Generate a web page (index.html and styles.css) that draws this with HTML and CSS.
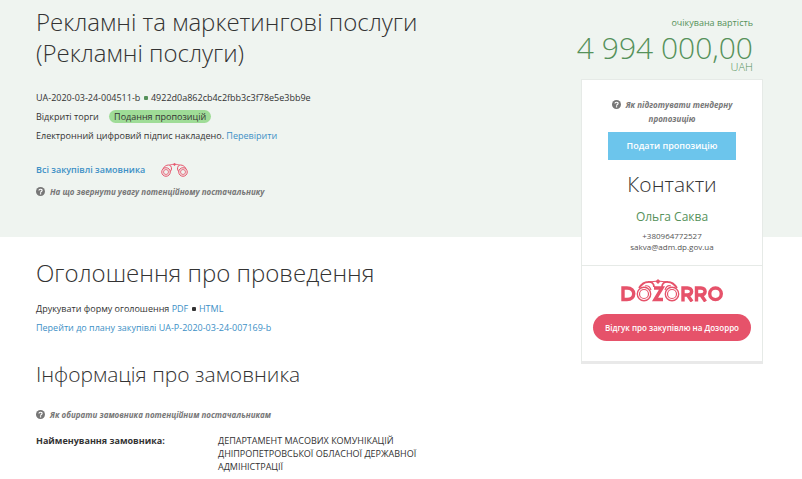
FILE: index.html
```html
<!DOCTYPE html>
<html lang="uk">
<head>
  <meta charset="UTF-8" />
  <meta name="viewport" content="width=device-width, initial-scale=1" />
  <title>Рекламні та маркетингові послуги</title>
  <link rel="stylesheet" href="styles.css">
</head>
<body>
  <!-- shared icons -->
  <svg class="sprite" aria-hidden="true">
    <symbol id="icon-question" viewBox="0 0 16 16">
      <circle cx="8" cy="8" r="8" fill="currentColor" />
      <path d="M5.2 6.3C5.3 3.2 10.8 3.2 10.8 6.2C10.8 8 8.1 8 8.1 10" fill="none" stroke="#fff" stroke-width="2.1" />
      <rect x="7" y="11" width="2.2" height="2.2" fill="#fff" />
    </symbol>
    <symbol id="icon-binoculars" viewBox="0 0 54 28">
      <g fill="none" stroke="currentColor">
        <circle cx="10" cy="18" r="8.500" stroke-width="2" />
        <circle cx="10" cy="18" r="5" stroke-width="1.600" />
        <circle cx="44" cy="18" r="8.500" stroke-width="2" />
        <circle cx="44" cy="18" r="5" stroke-width="1.600" />
        <path d="M4 11C7 7 10 4 15 4C19 4 21 7 21 12L19 17M50 11C47 7 44 4 39 4C35 4 33 7 33 12L35 17" stroke-width="2" />
        <path d="M17 4L27 2L37 4" stroke-width="1.600" />
      </g>
      <path d="M24 3L27 0L30 3L27 6Z" fill="currentColor" />
    </symbol>
  </svg>

  <div class="page">
    <header class="hero">
      <div class="hero-main">
        <h1>Рекламні та маркетингові послуги (Рекламні послуги)</h1>
        <p class="line">UA-2020-03-24-004511-b <span class="dot green"></span> 4922d0a862cb4c2fbb3c3f78e5e3bb9e</p>
        <p class="line">Відкриті торги <span class="status">Подання пропозицій</span></p>
        <p class="line">Електронний цифровий підпис накладено. <a href="#">Перевірити</a></p>
        <p class="customer">
          <a href="#">Всі закупівлі замовника</a>
          <svg class="binoculars" aria-hidden="true"><use href="#icon-binoculars" /></svg>
        </p>
        <a class="hint" href="#"><svg class="question" aria-hidden="true"><use href="#icon-question" /></svg>На що звернути увагу потенційному постачальнику</a>
      </div>
    </header>

    <aside class="sidebar">
      <div class="price">
        <span class="price-label">очікувана вартість</span>
        <strong>4&nbsp;994&nbsp;000,00</strong>
        <span class="currency">UAH</span>
      </div>
      <div class="card">
        <div class="contacts">
          <a class="hint" href="#"><svg class="question" aria-hidden="true"><use href="#icon-question" /></svg>Як підготувати тендерну пропозицію</a>
          <button type="button" class="btn-bid">Подати пропозицію</button>
          <h2>Контакти</h2>
          <h3>Ольга Саква</h3>
          <p>+380964772527</p>
          <p>sakva@adm.dp.gov.ua</p>
        </div>
        <div class="dozorro">
          <svg class="logo" viewBox="0 0 102 23" role="img" aria-label="Dozorro">
            <g fill="none" stroke="currentColor" stroke-width="3.4">
              <path d="M2 9H6C15 9 15 20.500 6 20.500H2Z" />
              <path d="M33 9H41L34 20.500H42" />
              <path d="M62 22.500V9H66.500C72 9 72 16 66.500 16H62M66.500 16L71 22.500" />
              <path d="M75.500 22.500V9H80C85.500 9 85.500 16 80 16H75.500M80 16L84.500 22.500" />
              <circle cx="94.500" cy="14.800" r="5.800" />
            </g>
            <g fill="none" stroke="currentColor">
              <circle cx="23" cy="15" r="6.700" stroke-width="1.400" />
              <circle cx="23" cy="15" r="4.500" stroke-width="1.200" />
              <circle cx="51" cy="15" r="6.700" stroke-width="1.400" />
              <circle cx="51" cy="15" r="4.500" stroke-width="1.200" />
              <path d="M18 9C20 6 23 3 27 3C31 2.500 33 5 33 8M56 9C54 6 51 3 47 3C43 2.500 41 5 41 8" stroke-width="1.800" />
              <path d="M24 7C27 6 29 8 30 11M50 7C47 6 45 8 44 11M28 3L37 2L46 3" stroke-width="1.200" />
            </g>
            <path d="M34.500 2.500L37 0L39.500 2.500L37 5Z" fill="currentColor" />
          </svg>
          <button type="button" class="btn-review">Відгук про закупівлю на Дозорро</button>
        </div>
      </div>
    </aside>

    <main class="details">
      <section>
        <h2>Оголошення про проведення</h2>
        <p class="line">Друкувати форму оголошення <a href="#">PDF</a> <span class="dot"></span> <a href="#">HTML</a></p>
        <p class="line"><a href="#">Перейти до плану закупівлі UA-P-2020-03-24-007169-b</a></p>
      </section>
      <section class="customer-info">
        <h2>Інформація про замовника</h2>
        <a class="hint" href="#"><svg class="question" aria-hidden="true"><use href="#icon-question" /></svg>Як обирати замовника потенційним постачальникам</a>
        <table>
          <tr>
            <th scope="row">Найменування замовника:</th>
            <td>ДЕПАРТАМЕНТ МАСОВИХ КОМУНІКАЦІЙ ДНІПРОПЕТРОВСЬКОЇ ОБЛАСНОЇ ДЕРЖАВНОЇ АДМІНІСТРАЦІЇ</td>
          </tr>
        </table>
      </section>
    </main>
  </div>
</body>
</html>
```
FILE: styles.css
```css
:root {
  --hero-bg: #eff4f0;
  --text: #333;
  --green: #55915a;
  --link: #3d90c6;
  --pink: #e6526a;
  --muted: #777;
}

* {
  box-sizing: border-box;
}

body {
  margin: 0;
  background: #fff;
  color: var(--text);
  font: 9px/19px "Open Sans", sans-serif;
}

h1, h2, h3, p {
  margin: 0;
  font-weight: 300;
}

p {
  font-weight: 400;
}

a {
  color: var(--link);
  text-decoration: none;
}

button {
  border: 0;
  color: #fff;
  font: 600 9px/20px "Open Sans", sans-serif;
  cursor: pointer;
}

.sprite {
  display: none;
}

/* the sidebar runs over both the hero and the details row */
.page {
  display: grid;
  grid-template-columns: 1fr 182px 39px;
  grid-template-rows: auto 1fr;
}

.hero {
  grid-column: 1 / -1;
  grid-row: 1;
  padding: 6px 36px 36px;
  background: var(--hero-bg);
}

.hero-main {
  max-width: 440px;
}

.hero h1 {
  margin-bottom: 20px;
  font-size: 24px;
  line-height: 31px;
}

.dot {
  display: inline-block;
  width: 4px;
  height: 4px;
  margin: 0 1px;
  border-radius: 1px;
  background: var(--text);
  vertical-align: 1px;
}

.dot.green {
  background: var(--green);
}

.status {
  display: inline-block;
  margin-left: 8px;
  padding: 0 5px;
  border-radius: 7px;
  background: #9fdc97;
  line-height: 13px;
}

.customer {
  display: flex;
  align-items: center;
  gap: 16px;
  margin: 15px 0 3px;
  font-weight: 600;
}

.binoculars {
  width: 27px;
  height: 14px;
  color: var(--pink);
}

.hint {
  color: var(--muted);
  font-size: 8px;
  font-style: italic;
  font-weight: 700;
}

.question {
  width: 9px;
  height: 9px;
  margin-right: 5px;
  vertical-align: -1px;
}

/* Sidebar */
.sidebar {
  grid-column: 2;
  grid-row: 1 / 3;
  padding-top: 16px;
}

.price {
  display: flex;
  flex-direction: column;
  align-items: flex-end;
  height: 63px;
  padding-right: 10px;
  color: var(--green);
  line-height: 14px;
}

.price strong {
  font-size: 30px;
  font-weight: 300;
  line-height: 36px;
}

.currency {
  font-size: 11px;
  font-weight: 300;
  line-height: 1px;
}

.card {
  border: 1px solid #e6eae7;
  border-bottom: 3px solid #e9e9e9;
  background: #fff;
  text-align: center;
}

.contacts {
  padding: 18px 26px 13px;
  line-height: 11px;
  color: #555;
}

.contacts .hint {
  display: block;
  line-height: 14px;
}

.btn-bid {
  width: 100%;
  margin: 6px 0;
  padding: 4px 0;
  background: #6cc5ec;
}

.contacts h2 {
  color: var(--text);
  font-size: 21px;
  line-height: 37px;
}

.contacts h3 {
  color: var(--green);
  font-size: 12px;
  font-weight: 400;
  line-height: 27px;
}

.contacts p {
  font-size: 8px;
}

.dozorro {
  padding: 13px 11px 20px;
  border-top: 1px solid #e6eae7;
}

.logo {
  display: block;
  width: 102px;
  margin: 0 auto 12px;
  color: var(--pink);
}

.btn-review {
  width: 100%;
  padding: 4px 0;
  border-radius: 14px;
  background: var(--pink);
  font-size: 8px;
  line-height: 19px;
}

/* Details */
.details {
  grid-column: 1;
  grid-row: 2;
  padding: 20px 36px 0;
}

.details h2 {
  margin-bottom: 10px;
  font-size: 24px;
  line-height: 32px;
}

.customer-info {
  margin-top: 21px;
}

.details .customer-info h2 {
  margin-bottom: 15px;
  font-size: 21px;
}

table {
  width: 400px;
  margin-top: 10px;
  border-collapse: collapse;
  line-height: 13px;
}

th, td {
  padding: 0;
  text-align: left;
  vertical-align: top;
}

th {
  width: 182px;
}
```
